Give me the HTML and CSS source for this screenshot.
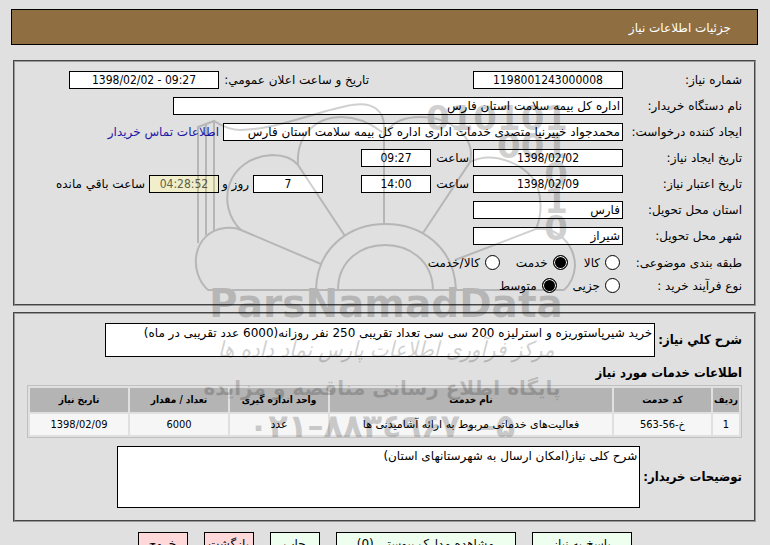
FILE: index.html
```html
<!DOCTYPE html>
<html lang="fa" dir="rtl">
<head>
  <meta charset="UTF-8">
  <meta name="viewport" content="width=device-width, initial-scale=1.0">
  <title>جزئیات اطلاعات نیاز</title>
  <link rel="stylesheet" href="styles.css">
</head>
<body>
  <header class="title-bar">جزئیات اطلاعات نیاز</header>

  <form>
    <!-- Need details -->
    <section class="panel details">
      <div class="row">
        <label class="caption" for="need-no">شماره نیاز:</label>
        <input class="field medium center" id="need-no" type="text" value="1198001243000008" readonly>
        <label class="announce" for="announce-date">تاریخ و ساعت اعلان عمومي:</label>
        <input class="field medium center" id="announce-date" type="text" dir="ltr" value="1398/02/02 - 09:27" readonly>
      </div>
      <div class="row">
        <label class="caption" for="buyer">نام دستگاه خریدار:</label>
        <input class="field widest" id="buyer" type="text" value="اداره کل بیمه سلامت استان فارس" readonly>
      </div>
      <div class="row">
        <label class="caption" for="creator">ایجاد کننده درخواست:</label>
        <input class="field wide" id="creator" type="text" value="محمدجواد خبیرنیا متصدی خدمات اداری اداره کل بیمه سلامت استان فارس" readonly>
        <a href="#">اطلاعات تماس خریدار</a>
      </div>
      <div class="row">
        <label class="caption" for="create-date">تاریخ ایجاد نیاز:</label>
        <input class="field medium center" id="create-date" type="text" dir="ltr" value="1398/02/02" readonly>
        <label class="hour" for="create-time">ساعت</label>
        <input class="field small center" id="create-time" type="text" value="09:27" readonly>
      </div>
      <div class="row">
        <label class="caption" for="valid-date">تاریخ اعتبار نیاز:</label>
        <input class="field medium center" id="valid-date" type="text" dir="ltr" value="1398/02/09" readonly>
        <label class="hour" for="valid-time">ساعت</label>
        <input class="field small center" id="valid-time" type="text" value="14:00" readonly>
        <input class="field small center days" id="days" type="text" value="7" readonly>
        <label class="day-label" for="days">روز و</label>
        <input class="field small center remain" id="remain" type="text" value="04:28:52" readonly>
        <label for="remain">ساعت باقي مانده</label>
      </div>
      <div class="row">
        <label class="caption" for="province">استان محل تحویل:</label>
        <input class="field medium" id="province" type="text" value="فارس" readonly>
      </div>
      <div class="row">
        <label class="caption" for="city">شهر محل تحویل:</label>
        <input class="field medium" id="city" type="text" value="شیراز" readonly>
      </div>
      <div class="row radios">
        <span class="caption">طبقه بندی موضوعی:</span>
        <label class="option"><input type="radio" name="category">کالا</label>
        <label class="option"><input type="radio" name="category" checked>خدمت</label>
        <label class="option"><input type="radio" name="category">کالا/خدمت</label>
      </div>
      <div class="row radios">
        <span class="caption">نوع فرآیند خرید :</span>
        <label class="option"><input type="radio" name="process">جزیی</label>
        <label class="option"><input type="radio" name="process" checked>متوسط</label>
      </div>
    </section>

    <!-- Requested services -->
    <section class="panel services">
      <div class="text-row">
        <label for="summary">شرح كلي نیاز:</label>
        <textarea class="field summary" id="summary" readonly>خرید شیرپاستوریزه و استرلیزه 200 سی سی تعداد تقریبی 250 نفر روزانه(6000 عدد تقریبی در ماه)</textarea>
      </div>
      <h2>اطلاعات خدمات مورد نیاز</h2>
      <table>
        <colgroup>
          <col class="col-index"><col class="col-code"><col><col class="col-data"><col class="col-data"><col class="col-data">
        </colgroup>
        <thead>
          <tr>
            <th>ردیف</th>
            <th>کد خدمت</th>
            <th>نام خدمت</th>
            <th>واحد اندازه گیری</th>
            <th>تعداد / مقدار</th>
            <th>تاریخ نیاز</th>
          </tr>
        </thead>
        <tbody>
          <tr>
            <td class="num">1</td>
            <td class="num">خ-56-563</td>
            <td>فعالیت‌های خدماتی مربوط به ارائه آشامیدنی ها</td>
            <td>عدد</td>
            <td class="num">6000</td>
            <td class="num">1398/02/09</td>
          </tr>
        </tbody>
      </table>
      <div class="text-row">
        <label for="notes">توضیحات خریدار:</label>
        <textarea class="field notes" id="notes" readonly>شرح کلی نیاز(امکان ارسال به شهرستانهای استان)</textarea>
      </div>
    </section>

    <div class="actions">
      <button type="button" class="btn reply">پاسخ به نیاز</button>
      <button type="button" class="btn docs">مشاهده مدارک پیوستی (0)</button>
      <button type="button" class="btn">چاپ</button>
      <button type="button" class="btn danger">بازگشت</button>
      <button type="button" class="btn danger">خروج</button>
    </div>
  </form>

  <!-- Watermark -->
  <svg class="watermark" width="390" height="360" viewBox="190 95 390 360" direction="ltr" aria-hidden="true">
    <g class="mark-lines">
      <path d="M198 243V127L214 121V231M206 235V124M214 121C222 126 230 130 240 130C276 130 320 110 352 105C374 101 384 112 384 126V225"/>
      <path d="M208 290C188 272 192 232 225 228Q235 227 241 230L321 264"/>
      <path d="M241 230C215 205 226 158 272 155Q290 155 298 165L345 236"/>
      <path d="M298 165C296 136 315 117 342 117Q362 117 382 132"/>
      <path d="M387 131C394 121 404 117 420 117C452 117 476 138 470 162L423 233"/>
      <path d="M470 162C494 150 530 165 538 188Q544 210 536 229L455 260"/>
      <path d="M536 229C557 226 575 245 575 266Q574 281 564 290"/>
      <path d="M316 290C318 202 453 202 456 290M338 290C338 230 432 230 433 290M208 290H564"/>
    </g>
    <g class="mark-digits">
      <text x="568" y="130">010101</text>
      <text x="568" y="158">001</text>
      <text x="568" y="187">0</text>
      <text x="568" y="213">1</text>
      <text x="568" y="240">0</text>
    </g>
    <text class="mark-name" x="386" y="317">ParsNamadData</text>
    <text class="mark-script" x="386" y="357">مرکز فرآوری اطلاعات پارس نماد داده ها</text>
    <text class="mark-site" x="382" y="395">پایگاه اطلاع رسانی مناقصه و مزایده</text>
    <text class="mark-phone" x="382" y="437">۰۲۱–۸۸۳٤۹۶۷۰–۵</text>
  </svg>
</body>
</html>
```
FILE: styles.css
```css
/* Page */
* {
  box-sizing: border-box;
}

body {
  margin: 0;
  padding: 9px 12px 0 11px;
  position: relative;
  overflow: hidden;
  background: #e0e0e0;
  color: #000;
  font-family: "DejaVu Sans", Tahoma, sans-serif;
  font-size: 12px;
  line-height: 18px;
}

.title-bar {
  height: 36px;
  padding: 9px 26px;
  border: 1px solid #000;
  background: #8f6e41;
  color: #fff;
}

/* Panels */
.panel {
  margin: 0 2px;
  border: 2px groove #999;
}

.details {
  margin-top: 15px;
  padding: 9px 12px 5px;
}

.services {
  margin-top: 6px;
  padding: 9px 12px 12px;
}

.row {
  display: flex;
  align-items: center;
  gap: 4px;
  height: 18px;
  margin-bottom: 8px;
  white-space: nowrap;
}

.caption {
  width: 115px;
  flex: none;
}

.announce {
  width: 246px;
  padding-right: 100px;
}

.hour {
  width: 34px;
}

a {
  color: #1d16a8;
  text-decoration: none;
}

/* Fields */
.field {
  height: 18px;
  margin: 0;
  padding: 0 2px;
  border: 1px solid #000;
  background: #fff;
  color: #000;
  font: inherit;
  outline: none;
}

.small {
  width: 70px;
}

.medium {
  width: 150px;
}

.wide {
  width: 400px;
}

.widest {
  width: 450px;
}

.center {
  font-family: "DejaVu Sans Condensed", Tahoma, sans-serif;
  text-align: center;
}

.days {
  margin-right: 34px;
}

.day-label {
  width: 26px;
}

.remain {
  background: #f0eecb;
  color: #605e48;
}

/* Radio buttons */
.radios {
  height: 19px;
  margin-bottom: 4px;
}

.option {
  display: flex;
  align-items: center;
  gap: 5px;
  margin-right: 3px;
  margin-left: 9px;
}

.option input {
  appearance: none;
  width: 15px;
  height: 15px;
  margin: 0;
  border: 1px solid #000;
  border-radius: 50%;
  background: #fff;
}

.option input:checked {
  background: #000;
  box-shadow: inset 0 0 0 1px #fff;
}

/* Services */
.text-row {
  display: flex;
  align-items: center;
  gap: 3px;
}

.text-row label,
h2 {
  font: bold 13px/18px "DejaVu Sans Condensed", Tahoma, sans-serif;
}

textarea.field {
  resize: none;
  overflow: hidden;
}

.summary {
  width: 550px;
  height: 34px;
}

.notes {
  width: 523px;
  height: 62px;
}

h2 {
  margin: 7px 0 3px;
}

table {
  width: 100%;
  margin-bottom: 8px;
  table-layout: fixed;
  border: 1px solid #c0c0c0;
  border-spacing: 2px;
  font-size: 11px;
  line-height: 16px;
  text-align: center;
}

th,
td {
  padding: 0;
  white-space: nowrap;
}

th {
  height: 24px;
  background: #b4b4b4;
  font-size: 10px;
  font-family: "DejaVu Sans Condensed", Tahoma, sans-serif;
}

td {
  height: 21px;
  background: #f6f6f6;
}

.num {
  font-family: "DejaVu Sans Condensed", Tahoma, sans-serif;
}

.col-index {
  width: 26px;
}

.col-code {
  width: 97px;
}

.col-data {
  width: 98px;
}

/* Buttons */
.actions {
  display: flex;
  justify-content: center;
  gap: 16px;
  margin-top: 10px;
}

.btn {
  width: 50px;
  height: 24px;
  padding: 0;
  border: 1px solid #000;
  background: #efffef;
  color: #000;
  font: inherit;
  white-space: nowrap;
}

.reply {
  width: 100px;
}

.docs {
  width: 180px;
}

.danger {
  background: #ffd9d9;
}

/* Watermark over the page */
.watermark {
  position: absolute;
  top: 95px;
  left: 190px;
  pointer-events: none;
  opacity: 0.18;
  text-anchor: middle;
}

.mark-lines {
  fill: none;
  stroke: #000;
  stroke-width: 2;
}

.mark-digits {
  font: bold 34px "DejaVu Sans", sans-serif;
  text-anchor: end;
}

.mark-name {
  font: bold 39px "DejaVu Sans", sans-serif;
}

.mark-script {
  font: italic 22px "DejaVu Sans Condensed", sans-serif;
}

.mark-site {
  font: bold 20px "DejaVu Sans", sans-serif;
}

.mark-phone {
  font: bold 32px "DejaVu Sans", sans-serif;
}
```
